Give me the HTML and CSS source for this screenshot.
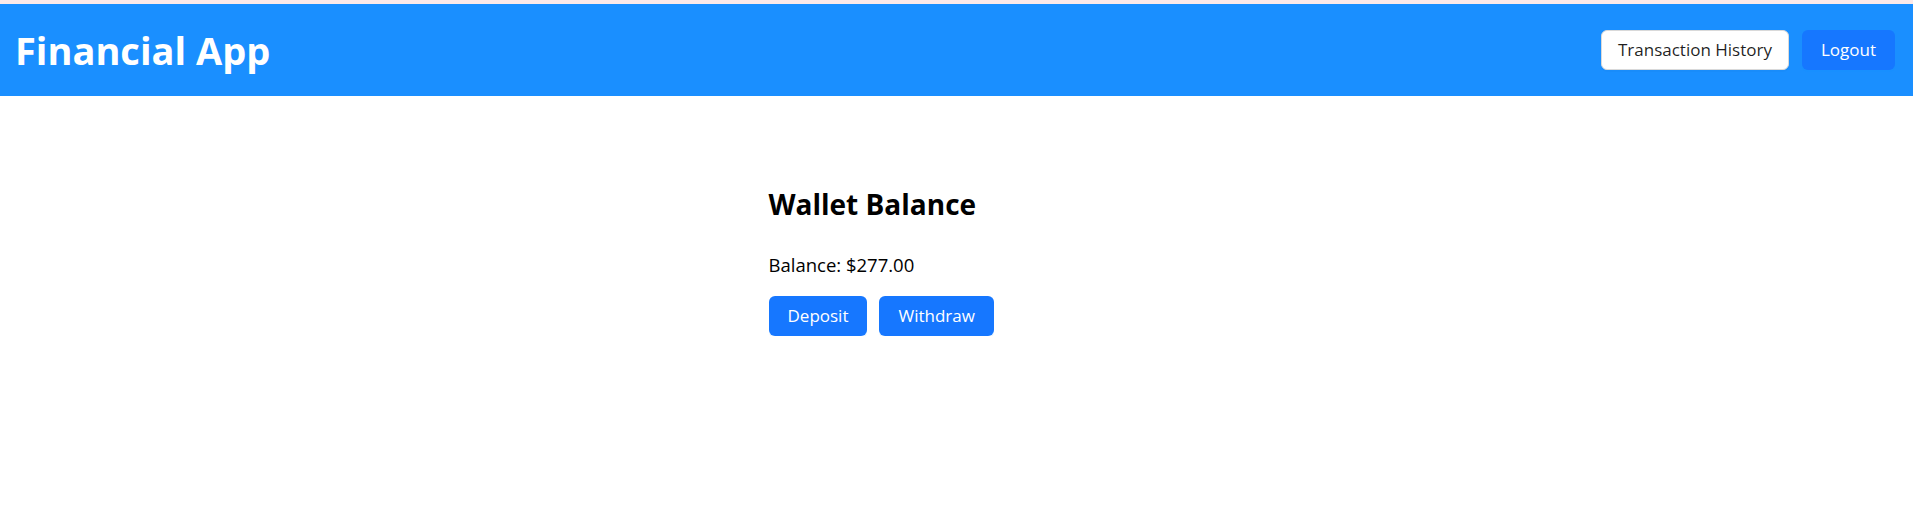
FILE: index.html
```html
<!DOCTYPE html>
<html lang="en">
<head>
<meta charset="utf-8">
<title>Financial App</title>
<link rel="stylesheet" href="styles.css">
</head>
<body>
<header class="app-header">
  <h1 class="brand">Financial App</h1>
  <nav class="header-actions">
    <button class="btn btn-default" type="button">Transaction History</button>
    <button class="btn btn-primary" type="button">Logout</button>
  </nav>
</header>
<main class="content">
  <section class="wallet">
    <h2 class="wallet-title">Wallet Balance</h2>
    <p class="wallet-balance">Balance: $277.00</p>
    <div class="wallet-actions">
      <button class="btn btn-primary" type="button">Deposit</button>
      <button class="btn btn-primary" type="button">Withdraw</button>
    </div>
  </section>
</main>
</body>
</html>
```
FILE: styles.css
```css
* { box-sizing: border-box; }
body {
  margin: 0;
  border-top: 4px solid #fce9e9;
  font-family: "Open Sans", "Noto Sans", sans-serif;
  color: #000;
  background: #fff;
}
.app-header {
  height: 92px;
  background: #1a8fff;
  display: flex;
  align-items: center;
  justify-content: space-between;
  padding: 0 18px 0 15px;
}
.brand {
  margin: 0;
  color: #fff;
  font-size: 38px;
  font-weight: 700;
  line-height: 52px;
}
.header-actions {
  display: flex;
  gap: 13px;
  align-items: center;
}
.btn {
  height: 40px;
  padding: 0 18px;
  border-radius: 6px;
  font-family: inherit;
  font-size: 17px;
  line-height: 38px;
  cursor: pointer;
  border: 1px solid transparent;
}
.btn-default {
  padding: 0 16px;
  background: #fff;
  color: rgba(0, 0, 0, 0.88);
  border-color: #d9d9d9;
  box-shadow: 0 2px 0 rgba(0, 0, 0, 0.02);
}
.btn-primary {
  background: #1677ff;
  color: #fff;
  box-shadow: 0 2px 0 rgba(5, 145, 255, 0.1);
}
.content {
  padding-top: 89px;
}
.wallet {
  max-width: 400px;
  margin: 0 auto;
  padding: 0 12px;
}
.wallet-title {
  margin: 0;
  font-size: 28px;
  font-weight: 700;
  line-height: 38px;
}
.wallet-balance {
  margin: 29px 0 0;
  font-size: 18.5px;
  line-height: 25px;
}
.wallet-actions {
  margin-top: 19px;
  display: flex;
  gap: 12px;
}
```
